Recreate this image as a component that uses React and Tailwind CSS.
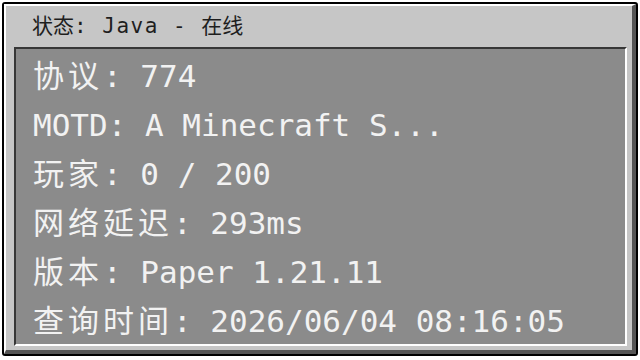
const LINES = [
  '协议: 774',
  'MOTD: A Minecraft S...',
  '玩家: 0 / 200',
  '网络延迟: 293ms',
  '版本: Paper 1.21.11',
  '查询时间: 2026/06/04 08:16:05',
];

// split text into CJK / latin runs so the wide glyphs get their own spacing
function runs(text) {
  const out = [];
  for (const ch of text) {
    const cjk = /[\u3400-\u9fff]/.test(ch);
    const last = out[out.length - 1];
    if (last && last.cjk === cjk) last.s += ch;
    else out.push({ cjk, s: ch });
  }
  return out;
}

function MixedText({ text, cjkClass }) {
  return runs(text).map((r, i) =>
    r.cjk ? <span key={i} className={cjkClass}>{r.s}</span> : <span key={i}>{r.s}</span>
  );
}

export default function App() {
  return (
    <div className="w-[640px] h-[360px] bg-white pl-[2px] pt-[2px] font-['DejaVu_Sans_Mono','Noto_Sans_CJK_SC',monospace]">
      {/* Outer frame */}
      <div className="w-[636px] h-[354px] border-2 border-black rounded-[3px] bg-[#c6c6c6]">
        <div className="h-full flex flex-col border-t-2 border-l-2 border-white border-r-4 border-b-4 border-r-[#555555] border-b-[#555555] pl-[8px] pr-[5px] pb-[4px]">
          {/* Title */}
          <div className="h-[41px] shrink-0 flex items-center pl-[18px] text-[21px] tracking-[1.5px] text-[#1e1e1e] whitespace-pre leading-none">
            <MixedText text="状态: Java - 在线" cjkClass="tracking-[0px]" />
          </div>

          {/* Info panel */}
          <div className="flex-1 bg-[#8b8b8b] border-2 border-t-[#373737] border-l-[#373737] border-r-white border-b-white pl-[17px] pt-[3px] overflow-hidden">
            {LINES.map((line) => (
              <div key={line} className="h-[49px] leading-[49px] text-[31px] text-[#f2f2f2] whitespace-pre">
                <MixedText text={line} cjkClass="tracking-[4px]" />
              </div>
            ))}
          </div>
        </div>
      </div>
    </div>
  );
}
